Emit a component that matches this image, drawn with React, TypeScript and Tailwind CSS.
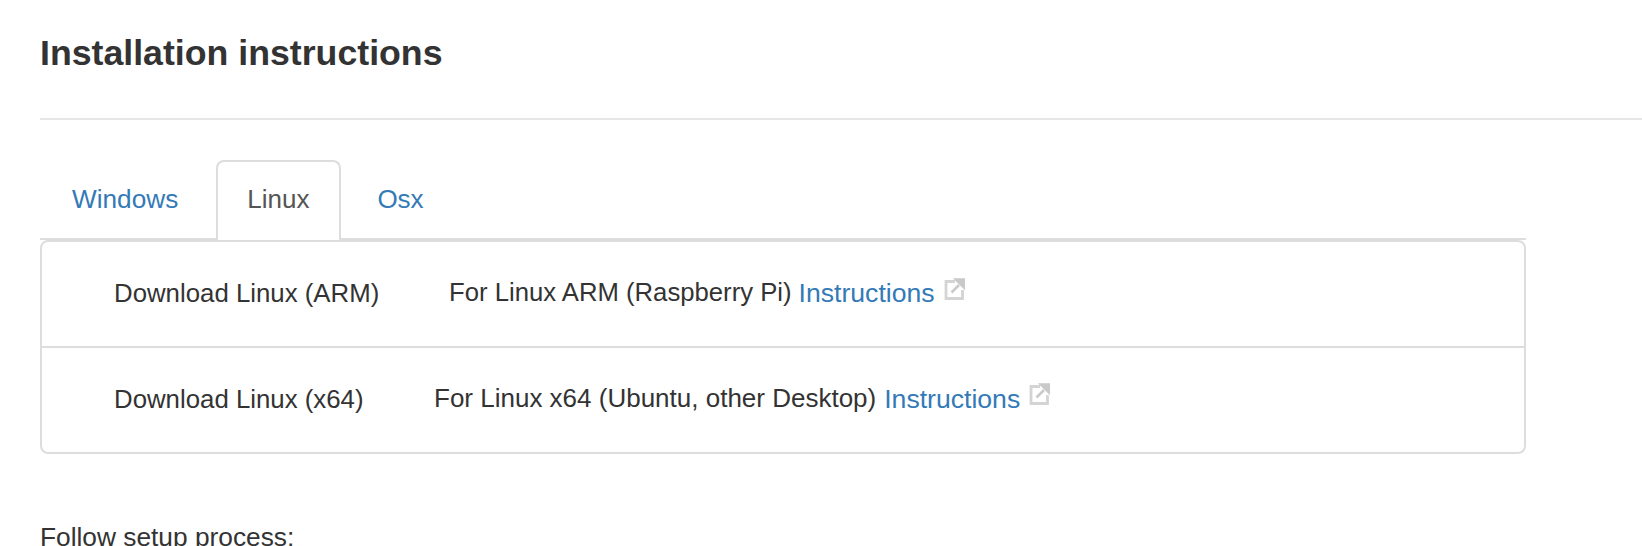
import React from "react";

function ExternalIcon({ className }: { className: string }) {
  return (
    <svg width="21" height="22" viewBox="0 0 21 22" className={`shrink-0 ${className}`}>
      <path d="M11 3.5H2v17h16.5V12" fill="none" stroke="#d4d4d4" strokeWidth="2.8" />
      <path d="M7.5 14.5L15 7M12 1.5h8.5V10z" fill="#c9c9c9" stroke="#c9c9c9" strokeWidth="2.6" />
    </svg>
  );
}

const rows = [
  {
    label: "Download Linux (ARM)",
    desc: "For Linux ARM (Raspberry Pi)",
    gap: "w-[407px] mt-[-2px]",
    descClass: "text-[25.7px] mt-[-4px]",
    linkClass: "ml-[7px] mt-[-1px]",
    iconClass: "ml-[9px] mt-[-10px]",
    height: "h-[106px] border-b-2 border-[#dddddd]",
  },
  {
    label: "Download Linux (x64)",
    desc: "For Linux x64 (Ubuntu, other Desktop)",
    gap: "w-[392px] mt-[-2px]",
    descClass: "mt-[-3px]",
    linkClass: "ml-2",
    iconClass: "ml-[9px] mt-[-12px]",
    height: "h-[104px]",
  },
];

export default function App() {
  return (
    <div className="h-[546px] overflow-hidden bg-white font-['Liberation_Sans',Arial,sans-serif] text-[26px] text-[#333]">
      <div className="pl-10">
        <h2 className="pt-[33px] text-[35.7px] leading-[40px] font-bold">Installation instructions</h2>
        <hr className="mt-[45px] border-t-2 border-[#e6e6e6]" />

        <div className="mr-[116px] mt-10">
          <div className="flex h-[80px] border-b-2 border-[#dddddd] text-[#337ab7]">
            <a className="pl-8 pr-[38px] pt-5 text-[26.2px]">Windows</a>
            <a className="mb-[-2px] h-[80px] rounded-t-lg border-2 border-b-0 border-[#dddddd] bg-white pl-[29px] pr-[30px] pt-[18px] text-[#555]">
              Linux
            </a>
            <a className="px-9 pt-5">Osx</a>
          </div>

          <div className="rounded-lg border-2 border-[#dddddd]">
            {rows.map((row) => (
              <div key={row.label} className={`flex items-center ${row.height}`}>
                <div className={`${row.gap} shrink-0 pl-[72px] text-[25.8px]`}>{row.label}</div>
                <span className={row.descClass}>{row.desc}</span>
                <a className={`text-[26.6px] text-[#337ab7] ${row.linkClass}`}>Instructions</a>
                <ExternalIcon className={row.iconClass} />
              </div>
            ))}
          </div>
        </div>

        <p className="mt-[64px] text-[26.3px]">Follow setup process:</p>
      </div>
    </div>
  );
}
